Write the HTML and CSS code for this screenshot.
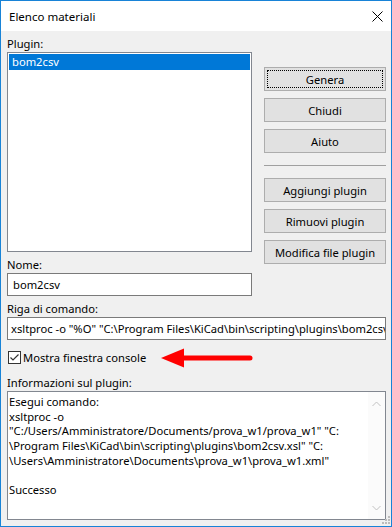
FILE: index.html
```html
<!DOCTYPE html>
<html lang="it">
<head>
  <meta charset="UTF-8">
  <meta name="viewport" content="width=device-width, initial-scale=1.0">
  <title>Elenco materiali</title>
  <link rel="stylesheet" href="styles.css">
</head>
<body>
  <div class="window">
    <div class="titlebar">
      <span class="title">Elenco materiali</span>
      <svg class="close" width="11" height="11" viewBox="0 0 11 11">
        <path d="M0.5 0.5L10.5 10.5M10.5 0.5L0.5 10.5" stroke="#000" stroke-width="1" fill="none"/>
      </svg>
    </div>

    <div class="content">
      <div class="top">
        <div class="left">
          <div class="label">Plugin:</div>
          <ul class="listbox">
            <li class="list-item selected">bom2csv</li>
          </ul>
          <div class="label label-gap">Nome:</div>
          <div class="field">bom2csv</div>
        </div>

        <div class="buttons">
          <button class="btn btn-default">Genera</button>
          <button class="btn">Chiudi</button>
          <button class="btn">Aiuto</button>
          <div class="separator"></div>
          <button class="btn btn-first">Aggiungi plugin</button>
          <button class="btn">Rimuovi plugin</button>
          <button class="btn">Modifica file plugin</button>
        </div>
      </div>

      <div class="label label-gap">Riga di comando:</div>
      <div class="field field-wide">xsltproc -o "%O" "C:\Program Files\KiCad\bin\scripting\plugins\bom2csv.xsl" "%I"</div>

      <div class="check-row">
        <span class="checkbox">
          <svg width="11" height="11" viewBox="0 0 11 11">
            <path d="M1.5 5.5L4 8L9.5 2.5" stroke="#333" stroke-width="1.2" fill="none"/>
          </svg>
        </span>
        <span class="check-label">Mostra finestra console</span>
        <svg class="arrow" width="92" height="22" viewBox="0 0 92 22">
          <path d="M0 11L23 1.5L23 20.5Z" fill="#f00"/>
          <path d="M22 11L89 11" stroke="#f00" stroke-width="5" stroke-linecap="round"/>
        </svg>
      </div>

      <div class="label label-info">Informazioni sul plugin:</div>
      <div class="info">
        <div class="info-text">
          <div>Esegui comando:</div>
          <div>xsltproc -o</div>
          <div>"C:/Users/Amministratore/Documents/prova_w1/prova_w1" "C:</div>
          <div>\Program Files\KiCad\bin\scripting\plugins\bom2csv.xsl" "C:</div>
          <div>\Users\Amministratore\Documents\prova_w1\prova_w1.xml"</div>
          <div>&nbsp;</div>
          <div>Successo</div>
        </div>
        <div class="scrollbar">
          <svg width="9" height="6" viewBox="0 0 9 6"><path d="M0.5 5L4.5 1L8.5 5" stroke="#c2c2c2" fill="none"/></svg>
          <svg width="9" height="6" viewBox="0 0 9 6"><path d="M0.5 1L4.5 5L8.5 1" stroke="#c2c2c2" fill="none"/></svg>
        </div>
      </div>
    </div>

    <svg class="grip" width="8" height="8" viewBox="0 0 8 8">
      <rect x="6" y="0" width="2" height="2" fill="#bcbcbc"/>
      <rect x="3" y="3" width="2" height="2" fill="#bcbcbc"/>
      <rect x="6" y="3" width="2" height="2" fill="#bcbcbc"/>
      <rect x="0" y="6" width="2" height="2" fill="#bcbcbc"/>
      <rect x="3" y="6" width="2" height="2" fill="#bcbcbc"/>
      <rect x="6" y="6" width="2" height="2" fill="#bcbcbc"/>
    </svg>
  </div>
</body>
</html>
```

FILE: styles.css
```css
* {
  margin: 0;
  padding: 0;
  box-sizing: border-box;
}

body {
  font-family: "Noto Sans", "Open Sans", sans-serif;
  font-size: 11.2px;
  color: #000;
  background: #fff;
}

.window {
  position: relative;
  width: 392px;
  height: 527px;
  border: 1px solid #1883d7;
  background-color: #f0f0f0;
  overflow: hidden;
}

.titlebar {
  display: flex;
  align-items: center;
  justify-content: space-between;
  height: 30px;
  padding: 0 8px 0 8px;
  background-color: #fff;
}

.title {
  font-size: 11.5px;
}

.close {
  margin-top: 1px;
}

.content {
  padding: 5px 5px 0 6px;
}

.top {
  display: flex;
  gap: 12px;
}

.left {
  width: 245px;
}

.label {
  height: 16px;
  line-height: 16px;
}

.label-gap {
  margin-top: 5px;
}

.label-info {
  margin-top: 8px;
}

.listbox {
  list-style: none;
  height: 200px;
  padding: 1px;
  border: 1px solid #828790;
  background-color: #fff;
}

.list-item {
  height: 16px;
  line-height: 16px;
  padding-left: 3px;
}

.selected {
  color: #fff;
  background-color: #0078d7;
}

.field {
  height: 23px;
  line-height: 21px;
  padding-left: 5px;
  border: 1px solid #7a7a7a;
  background-color: #fff;
  white-space: nowrap;
  overflow: hidden;
}

.field-wide {
  padding-left: 3px;
}

.buttons {
  display: flex;
  flex-direction: column;
  gap: 7px;
  width: 122px;
  padding-top: 31px;
}

.btn {
  height: 24px;
  font-family: inherit;
  font-size: 11.2px;
  color: #000;
  background-color: #e1e1e1;
  border: 1px solid #adadad;
}

.btn-default {
  outline: 1px dotted #000;
  outline-offset: -4px;
}

.separator {
  height: 1px;
  margin: 5px 0;
  background-color: #a0a0a0;
}

.check-row {
  display: flex;
  align-items: center;
  height: 20px;
  margin-top: 7px;
}

.checkbox {
  display: flex;
  align-items: center;
  justify-content: center;
  width: 13px;
  height: 13px;
  margin-left: 1px;
  border: 1px solid #333;
  background-color: #fff;
}

.check-label {
  margin-left: 2px;
}

.arrow {
  margin-left: 15px;
  margin-top: 1px;
}

.info {
  display: flex;
  height: 129px;
  border: 1px solid #828790;
  background-color: #fff;
}

.info-text {
  flex: 1;
  padding: 3px 0 0 1px;
  line-height: 14.7px;
  white-space: nowrap;
  overflow: hidden;
}

.scrollbar {
  display: flex;
  flex-direction: column;
  justify-content: space-between;
  align-items: center;
  width: 17px;
  padding: 9px 0 8px;
  background-color: #fbfbfb;
}

.grip {
  position: absolute;
  right: 1px;
  bottom: 2px;
}
```
